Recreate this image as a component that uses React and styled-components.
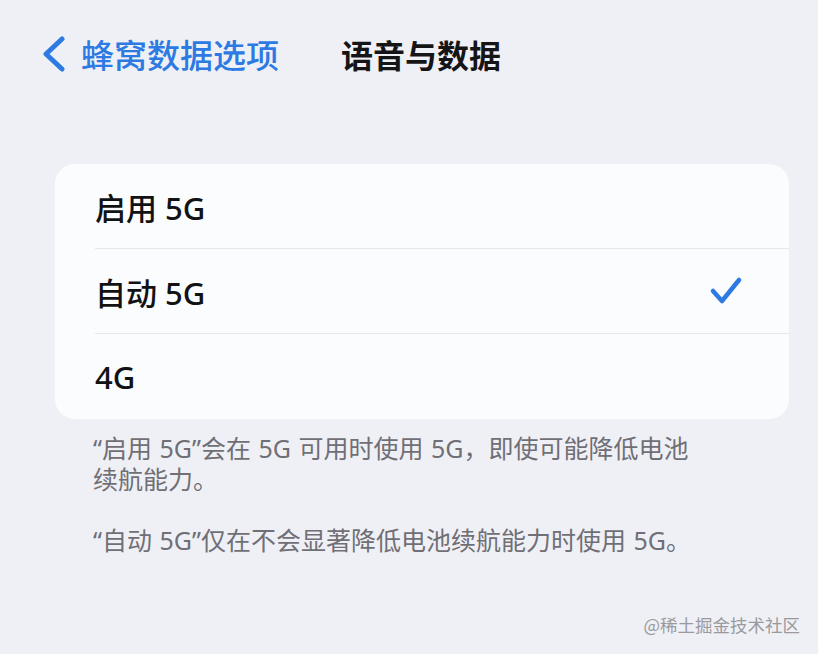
import React from 'react';
import styled, { createGlobalStyle } from 'styled-components';

const GlobalStyle = createGlobalStyle`
  html, body {
    margin: 0;
    padding: 0;
    background: #eff0f5;
  }
  body {
    font-family: "Noto Sans CJK SC", "Noto Sans", sans-serif;
  }
`;

const Page = styled.div`
  position: relative;
  width: 818px;
  height: 654px;
  background: #eff0f5;
  overflow: hidden;
`;

const NavBar = styled.header`
  display: flex;
  align-items: center;
  height: 56px;
  padding: 26px 0 0 42px;
  gap: 62px;
`;

const BackButton = styled.button`
  display: flex;
  align-items: center;
  gap: 15px;
  padding: 0;
  border: none;
  background: none;
  color: #2d7ae3;
  font-family: inherit;
  font-size: 33px;
  font-weight: 500;
  cursor: pointer;
`;

const Title = styled.h1`
  margin: 0;
  font-size: 32px;
  font-weight: 700;
  color: #151517;
`;

const Card = styled.ul`
  list-style: none;
  margin: 82px 29px 0 55px;
  padding: 0;
  background: #fbfcfd;
  border-radius: 20px;
  overflow: hidden;
`;

const Row = styled.li`
  padding-left: 40px;
`;

const RowInner = styled.div`
  display: flex;
  align-items: center;
  justify-content: space-between;
  height: 85px;
  padding-right: 46px;
  border-bottom: ${({ $last }) => ($last ? 'none' : '1.5px solid #e6e7eb')};
  box-sizing: border-box;
  font-family: "Noto Sans", "Noto Sans CJK SC", sans-serif;
  font-size: 31px;
  font-weight: 500;
  color: #121214;
`;

const Footer = styled.div`
  padding: 14px 60px 0 93px;
  color: #6f6f75;
  font-family: "Noto Sans", "Noto Sans CJK SC", sans-serif;
  font-size: 25px;
  line-height: 31px;
  word-spacing: 1px;
`;

const Note = styled.p`
  margin: 0 0 30px;
`;

const Watermark = styled.div`
  position: absolute;
  right: 18px;
  top: 612px;
  color: #9a9a9e;
  font-size: 17.5px;
`;

const Chevron = () => (
  <svg width="24" height="36" viewBox="0 0 24 36">
    <path d="M20 3 L4 18 L20 33" fill="none" stroke="currentColor" strokeWidth="5" strokeLinecap="round" strokeLinejoin="round" />
  </svg>
);

const Check = () => (
  <svg width="34" height="30" viewBox="0 0 34 30">
    <path d="M4 15 L13 25 L30 4" fill="none" stroke="#2d7ae3" strokeWidth="4.5" strokeLinecap="round" strokeLinejoin="round" />
  </svg>
);

const options = [
  { label: '启用 5G', checked: false },
  { label: '自动 5G', checked: true },
  { label: '4G', checked: false },
];

const App = () => (
  <Page>
    <GlobalStyle />
    <NavBar>
      <BackButton>
        <Chevron />
        蜂窝数据选项
      </BackButton>
      <Title>语音与数据</Title>
    </NavBar>
    <Card>
      {options.map((o, i) => (
        <Row key={o.label}>
          <RowInner $last={i === options.length - 1}>
            <span>{o.label}</span>
            {o.checked && <Check />}
          </RowInner>
        </Row>
      ))}
    </Card>
    <Footer>
      <Note>“启用 5G”会在 5G 可用时使用 5G，即使可能降低电池<br />续航能力。</Note>
      <Note>“自动 5G”仅在不会显著降低电池续航能力时使用 5G。</Note>
    </Footer>
    <Watermark>@稀土掘金技术社区</Watermark>
  </Page>
);

export default App;
